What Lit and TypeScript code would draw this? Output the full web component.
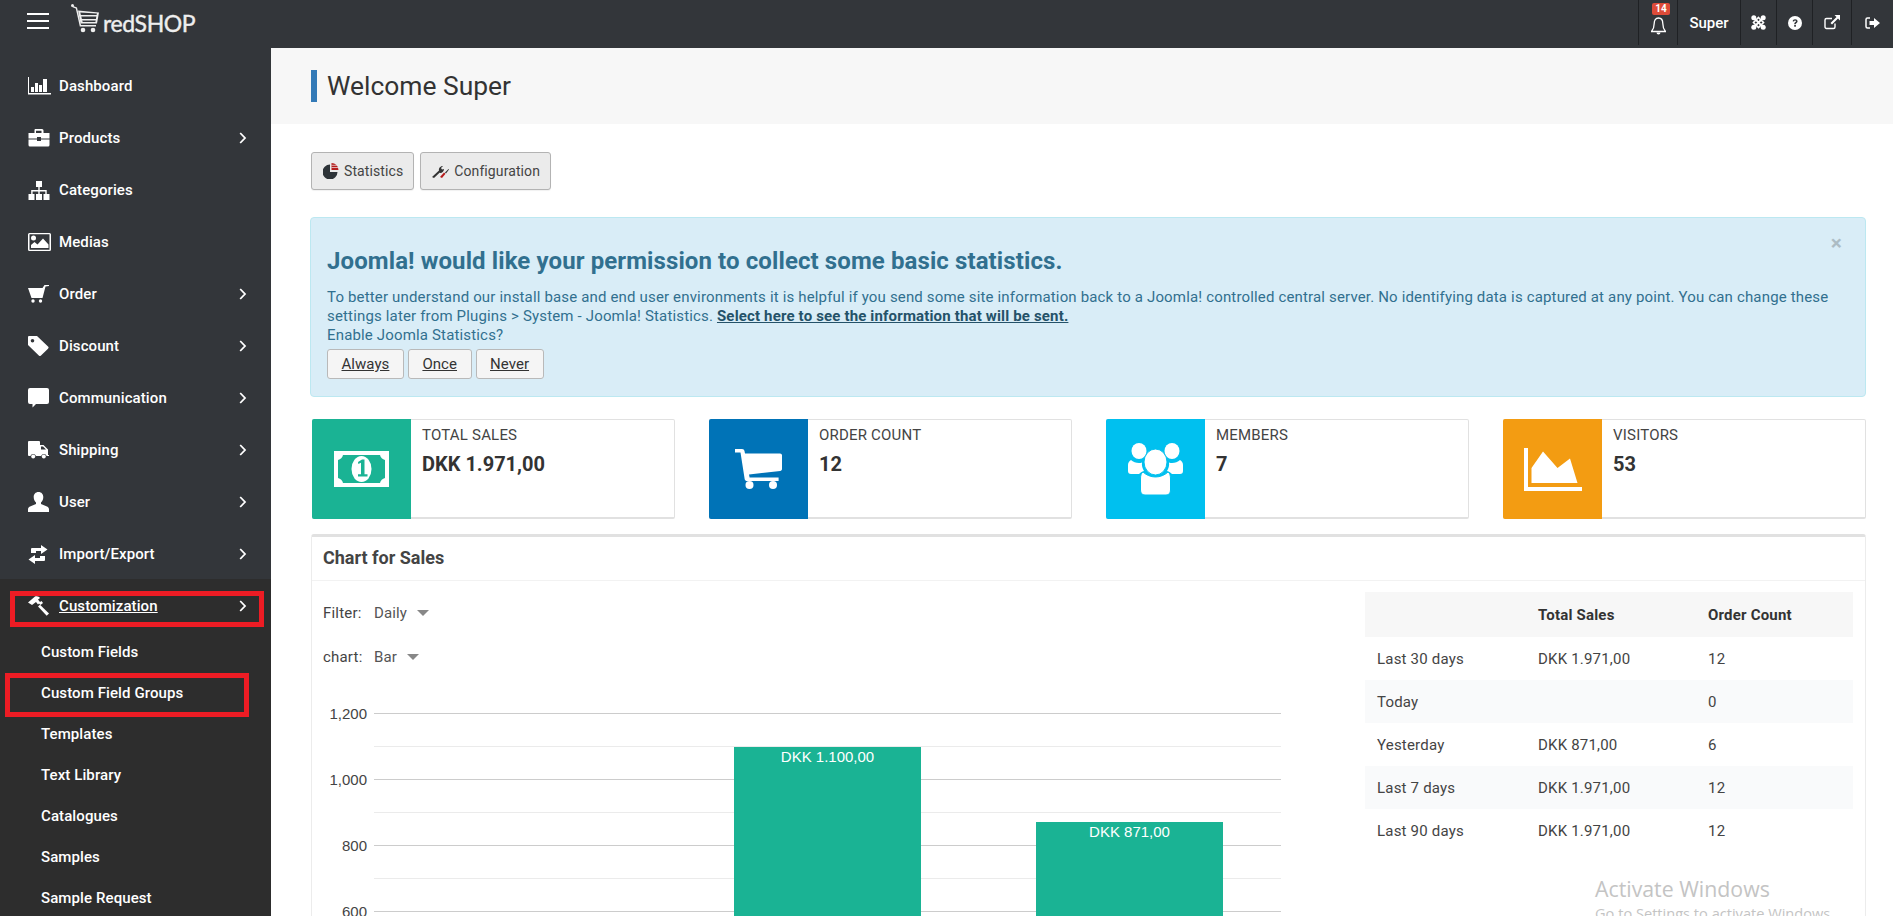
import { LitElement, html, css, svg } from 'lit';
import { customElement } from 'lit/decorators.js';

const icons: Record<string, any> = {
  dashboard: svg`<svg class="ni" width="23" height="18" viewBox="0 0 23 18"><path d="M0 0h1v16h22v1.500H0z"/><rect x="3" y="10" width="3" height="5"/><rect x="7" y="6" width="3" height="9"/><rect x="11" y="8" width="3" height="7"/><rect x="15" y="2" width="4" height="13"/></svg>`,
  products: svg`<svg class="ni" width="22" height="18" viewBox="0 0 22 18"><path d="M7 0h7a1.500 1.500 0 0 1 1.500 1.500V4h6V9.500H13V8H9v1.500H.5V4h6V1.500A1.500 1.500 0 0 1 7 0zm1 1.800V4h5.500V1.800z" fill-rule="evenodd"/><path d="M.5 10.500H9V12h4v-1.500h8.500V16a1.500 1.500 0 0 1-1.500 1.500H2A1.500 1.500 0 0 1 .5 16z"/></svg>`,
  categories: svg`<svg class="ni" width="22" height="19" viewBox="0 0 22 19"><rect x="8" y="0" width="6" height="6"/><rect x="0.500" y="13" width="6" height="6"/><rect x="8" y="13" width="6" height="6"/><rect x="15.500" y="13" width="6" height="6"/><path d="M10.300 6h1.400v3h7v4h-1.400v-2.600h-5.600V13h-1.400v-2.600H4.600V13H3.200V9h7.100z"/></svg>`,
  medias: svg`<svg class="ni" width="23" height="18" viewBox="0 0 23 18"><path d="M1.500 0h20A1.500 1.500 0 0 1 23 1.500v15a1.500 1.500 0 0 1-1.500 1.500h-20A1.500 1.500 0 0 1 0 16.500v-15A1.500 1.500 0 0 1 1.500 0zM1.500 1.300v15.400h20V1.300z" fill-rule="evenodd"/><circle cx="5.500" cy="5" r="2.500"/><path d="M3 15v-3l3.500-3 3 2.500L15 5.500l5.500 6V15z"/></svg>`,
  order: svg`<svg class="ni" width="21" height="18" viewBox="0 0 21 18"><path d="M0 3h14.500l2-3H21v1l-3.500.500L14.500 13h-11z"/><circle cx="5" cy="16" r="1.700"/><circle cx="12.500" cy="16" r="1.700"/></svg>`,
  discount: svg`<svg class="ni" width="21" height="20" viewBox="0 0 21 20"><path d="M1 0h8l11 10.500a1.500 1.500 0 0 1 0 2.200L13 19.500a1.500 1.500 0 0 1-2.200 0L0 9V1a1 1 0 0 1 1-1zm3.500 3A1.800 1.800 0 1 0 4.500 6.600 1.800 1.800 0 0 0 4.500 3z" fill-rule="evenodd"/></svg>`,
  communication: svg`<svg class="ni" width="21" height="20" viewBox="0 0 21 20"><path d="M2 0h17a2 2 0 0 1 2 2v12a2 2 0 0 1-2 2H8l-3.500 3.500V16H2a2 2 0 0 1-2-2V2a2 2 0 0 1 2-2z"/></svg>`,
  shipping: svg`<svg class="ni" width="21" height="18" viewBox="0 0 21 18"><path d="M1 0h10a1 1 0 0 1 1 1v3h3.500L20 8.500V14h1v1h-2.300a3 3 0 0 0-5.600 0H8a3 3 0 0 0-5.600 0H1a1 1 0 0 1-1-1V1a1 1 0 0 1 1-1zM13 5.500V8.500h5l-3-3z" fill-rule="evenodd"/><circle cx="5.200" cy="15.500" r="2"/><circle cx="15.800" cy="15.500" r="2"/></svg>`,
  user: svg`<svg class="ni" width="21" height="20" viewBox="0 0 21 20"><path d="M10.500 0c3 0 4.800 2.200 4.800 5 0 2.300-1 4.300-2.300 5.500v1.500l6 2.500c1.300.6 2 1.600 2 3v2.500H0V17.500c0-1.400.7-2.400 2-3l6-2.500v-1.500C6.700 9.300 5.700 7.300 5.700 5c0-2.800 1.800-5 4.800-5z"/></svg>`,
  import: svg`<svg class="ni" width="20" height="19" viewBox="0 0 20 19"><path d="M4 3h9V0l6.500 4.500L13 9V6H8v2H3V4a1 1 0 0 1 1-1z"/><path d="M16 16H7v3L.5 14.500 7 10v3h5v-2h5v4a1 1 0 0 1-1 1z"/></svg>`,
  custom: svg`<svg class="ni" width="21" height="20" viewBox="0 0 21 20"><path d="M0 6.500L7 .5c2-.8 4 0 5 1.500L10 3.500l2 2.500 1.500-1L15 7l-2.500 2-1.500-1.500-1 1-2-2.500-4 3z"/><path d="M10 10.500l2-1.800L21 17.500l-2.300 2.300z"/></svg>`,
};

const chevron = html`<svg class="chev" width="8" height="12" viewBox="0 0 8 12"><path d="M1.200 1l4.800 5-4.800 5" fill="none" stroke="#fff" stroke-width="1.800"/></svg>`;

const navItems = [
  { name: 'Dashboard', icon: 'dashboard', more: false },
  { name: 'Products', icon: 'products', more: true },
  { name: 'Categories', icon: 'categories', more: false },
  { name: 'Medias', icon: 'medias', more: false },
  { name: 'Order', icon: 'order', more: true },
  { name: 'Discount', icon: 'discount', more: true },
  { name: 'Communication', icon: 'communication', more: true },
  { name: 'Shipping', icon: 'shipping', more: true },
  { name: 'User', icon: 'user', more: true },
  { name: 'Import/Export', icon: 'import', more: true },
];

const subItems = ['Custom Fields', 'Custom Field Groups', 'Templates', 'Text Library', 'Catalogues', 'Samples', 'Sample Request'];

const statCards = [
  {
    label: 'TOTAL SALES', value: 'DKK 1.971,00', color: '#1ab394',
    icon: svg`<svg width="55" height="36" viewBox="0 0 55 36"><path d="M0 0h55v36H0z" fill="#fff"/><path d="M9 4h37c.5 2.500 2.500 4.500 5 5v18c-2.500.5-4.500 2.500-5 5H9c-.5-2.500-2.500-4.500-5-5V9c2.500-.5 4.500-2.500 5-5z" fill="#1ab394"/><path d="M0 0h4v4H0zM51 0h4v4h-4zM0 32h4v4H0zM51 32h4v4h-4z" fill="#fff"/><ellipse cx="27.500" cy="18" rx="10" ry="13" fill="#fff"/><path d="M24 12.500l4-2.500h2.500v15.500h3V28h-9.500v-2.500h3V13.500l-2.700 1.300z" fill="#1ab394" transform="translate(0 -1) scale(1 .95)"/></svg>`,
  },
  {
    label: 'ORDER COUNT', value: '12', color: '#0073b7',
    icon: svg`<svg width="47" height="40" viewBox="0 0 47 40"><path d="M0 0h7c1.500 0 2.200.7 2.500 2l.5 2.500h35c1.200 0 2 .8 2 2V20c0 1-.7 1.800-1.800 2L14 25.500l.6 3h29v3.500H12c-1.200 0-2-.7-2.300-1.800L5.500 3.500H0z" fill="#fff"/><circle cx="14.500" cy="36" r="4" fill="#fff"/><circle cx="38" cy="36" r="4" fill="#fff"/></svg>`,
  },
  {
    label: 'MEMBERS', value: '7', color: '#00c0ef',
    icon: svg`<svg width="55" height="52" viewBox="0 0 55 52"><g fill="#fff"><ellipse cx="11" cy="8" rx="7.500" ry="8"/><ellipse cx="44" cy="8" rx="7.500" ry="8"/><path d="M3 17c2 2 5 3 8 3 1 0 2 0 3-.5-.5 3 .5 6 2 8.500-2 .5-4 2-5 3H3c-2 0-3-1-3-3v-6c0-2 1-4 3-5z"/><path d="M52 17c-2 2-5 3-8 3-1 0-2 0-3-.5.5 3-.5 6-2 8.500 2 .5 4 2 5 3h8c2 0 3-1 3-3v-6c0-2-1-4-3-5z"/></g><ellipse cx="27.500" cy="19" rx="11.500" ry="13" fill="#fff" stroke="#00c0ef" stroke-width="1"/><path d="M15 29c3 3 8 5 12.500 5S37 32 40 29c2 1 2.500 4 2.500 7v11c0 3-1.500 5-4.500 5H17c-3 0-4.500-2-4.500-5V36c0-3 .5-6 2.500-7z" fill="#fff" stroke="#00c0ef" stroke-width="1"/></svg>`,
  },
  {
    label: 'VISITORS', value: '53', color: '#f39c12',
    icon: svg`<svg width="58" height="43" viewBox="0 0 58 43"><path d="M0 0h4v39h54v4H0z" fill="#fff"/><path d="M7.500 35V20L19 3.500l14.500 16.500L46 10.500l7.500 24.500z" fill="#fff"/></svg>`,
  },
];

const tableRows = [
  ['Last 30 days', 'DKK 1.971,00', '12'],
  ['Today', '', '0'],
  ['Yesterday', 'DKK 871,00', '6'],
  ['Last 7 days', 'DKK 1.971,00', '12'],
  ['Last 90 days', 'DKK 1.971,00', '12'],
];

const gridLines = [
  { y: 34.5, label: '1,200' },
  { y: 67.5 },
  { y: 100.5, label: '1,000' },
  { y: 133.5 },
  { y: 166.5, label: '800' },
  { y: 199.5 },
  { y: 232.5, label: '600' },
];

const bars = [
  { x: 422, y: 68, label: 'DKK 1.100,00' },
  { x: 724, y: 143, label: 'DKK 871,00' },
];

@customElement('app-root')
export class AppRoot extends LitElement {
  static styles = css`
    :host {
      display: block;
      position: relative;
      width: 1893px;
      height: 916px;
      overflow: hidden;
      font-family: Roboto, "Liberation Sans", sans-serif;
      font-size: 15px;
      letter-spacing: .2px;
      color: #333;
      background: #fff;
    }
    * { box-sizing: border-box; }
    .topbar {
      display: flex;
      align-items: flex-start;
      height: 48px;
      background: #33363a;
      color: #fff;
    }
    .burger {
      display: flex;
      flex-direction: column;
      gap: 5px;
      width: 22px;
      margin: 13px 0 0 27px;
    }
    .burger span { height: 2px; background: #fff; }
    .logo {
      display: flex;
      align-items: flex-start;
      margin: 4px 0 0 22px;
    }
    .logo b {
      font-family: Lato, sans-serif;
      font-weight: 400;
      font-size: 23px;
      margin: 5px 0 0 4px;
      letter-spacing: -0.4px;
      color: #eee;
      -webkit-text-stroke: .4px #eee;
    }
    .tools { display: flex; margin-left: auto; height: 45px; }
    .tool {
      position: relative;
      display: flex;
      align-items: center;
      justify-content: center;
      border-left: 1px solid #1f2124;
      font-weight: 500;
      letter-spacing: 0;
    }
    .badge {
      position: absolute;
      top: 3px;
      left: 13px;
      width: 18px;
      height: 12px;
      border-radius: 2px;
      background: #dd4b39;
      color: #fff;
      font-size: 10px;
      font-weight: 700;
      line-height: 12px;
      text-align: center;
    }
    .layout { display: flex; }
    .sidebar {
      position: relative;
      width: 271px;
      height: 868px;
      flex: none;
      padding-top: 12px;
      background: #33363a;
      color: #fff;
      font-weight: 500;
      letter-spacing: .1px;
    }
    .item {
      display: flex;
      align-items: center;
      height: 52px;
      padding-left: 28px;
    }
    .item .slot { width: 31px; display: flex; }
    .ni { fill: #fff; }
    .chev { margin-left: auto; margin-right: 24px; }
    .group { background: #2d2d2d; height: 400px; margin-top: -1px; padding-top: 1px; }
    .group .item .label { text-decoration: underline; }
    .sub {
      height: 41px;
      line-height: 41px;
      padding-left: 41px;
    }
    .mark {
      position: absolute;
      border: 5px solid #ed1c24;
      pointer-events: none;
    }
    .mark.one { left: 10px; top: 543px; width: 254px; height: 36px; }
    .mark.two { left: 5px; top: 625px; width: 244px; height: 44px; }
    .main { flex: 1; min-width: 0; }
    .title-bar {
      display: flex;
      align-items: center;
      height: 76px;
      padding-left: 40px;
      background: #f7f7f7;
    }
    .title-bar h1 {
      margin: 0;
      height: 32px;
      padding-left: 10px;
      border-left: 6px solid #337ab7;
      font-size: 26.400px;
      line-height: 32px;
      font-weight: 400;
      letter-spacing: 0;
      color: #333;
    }
    .content { padding: 28px 27px 0 39px; }
    .actions { display: flex; gap: 6px; margin-left: 1px; }
    .action {
      display: flex;
      align-items: center;
      gap: 5px;
      height: 38px;
      padding: 0 10px 0 11px;
      background: #ebebeb;
      border: 1px solid #b3b3b3;
      border-radius: 3px;
      box-shadow: 0 1px 1px rgba(0, 0, 0, .06);
      color: #444;
      font-size: 14px;
      letter-spacing: .1px;
    }
    .alert {
      position: relative;
      height: 180px;
      margin-top: 27px;
      padding: 26px 16px 0;
      background: #d9edf7;
      border: 1px solid #bce8f1;
      border-radius: 4px;
      color: #31708f;
      line-height: 19px;
      letter-spacing: .16px;
    }
    .alert h2 {
      margin: 0 0 10px;
      font-size: 24px;
      line-height: 34px;
      font-weight: 700;
      letter-spacing: .1px;
      color: #31708f;
    }
    .alert p { margin: 0; }
    .alert a { font-weight: 700; color: #245269; text-decoration: underline; }
    .close {
      position: absolute;
      top: 15px;
      right: 23px;
      font-size: 21px;
      line-height: 21px;
      font-weight: 700;
      color: #000;
      opacity: .2;
    }
    .choices { display: flex; gap: 4px; margin-top: 4px; }
    .choice {
      height: 30px;
      line-height: 29px;
      padding: 0 13.500px;
      background: #f5f5f5;
      border: 1px solid #b9b9b9;
      border-radius: 3px;
      color: #333;
      text-decoration: underline;
      letter-spacing: .05px;
    }
    .cards {
      display: grid;
      grid-template-columns: repeat(4, 363px);
      gap: 34px;
      margin: 22px 0 0 2px;
    }
    .card {
      display: flex;
      height: 100px;
      background: #fff;
      border: 1px solid #e1e1e1;
      border-bottom-width: 2px;
      border-radius: 2px;
    }
    .card-icon {
      display: flex;
      align-items: center;
      justify-content: center;
      width: 99px;
      margin: -1px 0 -2px -1px;
      flex: none;
      border-radius: 2px 0 0 2px;
    }
    .card-body { padding: 5px 11px; }
    .card-label { line-height: 20px; color: #444; }
    .card-value { margin-top: 8px; font-size: 20px; line-height: 22px; font-weight: 700; letter-spacing: 0; color: #333; }
    .panel {
      height: 400px;
      margin: 15px 0 0 1px;
      border: 1px solid #ececec;
      border-top: 3px solid #e1e1e1;
      border-radius: 3px 3px 0 0;
    }
    .panel-head {
      height: 44px;
      padding-left: 11px;
      border-bottom: 1px solid #f2f2f2;
      font-size: 18px;
      line-height: 41px;
      font-weight: 700;
      letter-spacing: 0;
      color: #444;
    }
    .panel-body { display: flex; }
    .chart-col { width: 1053px; flex: none; padding-top: 10px; }
    .filter {
      display: flex;
      align-items: center;
      height: 44px;
      padding-left: 11px;
      color: #444;
    }
    .filter span { width: 51px; }
    .filter em { font-style: normal; color: #555; margin-right: 10px; letter-spacing: .1px; }
    .caret {
      width: 0;
      height: 0;
      border-left: 6px solid transparent;
      border-right: 6px solid transparent;
      border-top: 6px solid #888;
    }
    .chart { display: block; }
    .chart text { font-family: "Liberation Sans", Arial, sans-serif; font-size: 15px; letter-spacing: 0; }
    .stats {
      width: 488px;
      height: 260px;
      margin-top: 11px;
      border-collapse: collapse;
      table-layout: fixed;
      color: #444;
    }
    .stats th {
      height: 45px;
      padding: 0 12px;
      background: #f7f7f7;
      text-align: left;
      font-weight: 700;
      color: #333;
    }
    .stats td { height: 43px; padding: 0 12px; }
    .stats tbody tr:nth-child(even) { background: #f9fafb; }
    .watermark {
      position: absolute;
      left: 1595px;
      top: 875px;
      color: #c4c4c4;
      font-family: "Open Sans", sans-serif;
      letter-spacing: 0;
    }
    .watermark div:first-child { font-size: 21.300px; line-height: 28px; }
    .watermark div:last-child { font-size: 14.600px; line-height: 20px; }
  `;

  renderTopbar() {
    return html`
      <header class="topbar">
        <div class="burger"><span></span><span></span><span></span></div>
        <div class="logo">
          <svg width="28" height="29" viewBox="0 0 28 29"><path d="M2 2l4 1.500 4 17.500h15v1.500H8.800L4.800 4.500 1.500 3.200z" fill="#eee"/><circle cx="1.500" cy="1.500" r="1.500" fill="#eee"/><path d="M7 6.500l21 2-2 11H9.500zM9.300 8.500l.6 2.500h15.700l.3-1.500zM10.300 12.500l.6 2.500h14l.4-2.500zM11.200 16.500l.5 1.500h12.700l.3-1.500z" fill="#eee" fill-rule="evenodd"/><circle cx="12" cy="26" r="2.300" fill="#eee"/><circle cx="22" cy="26" r="2.300" fill="#eee"/></svg>
          <b>redSHOP</b>
        </div>
        <div class="tools">
          <div class="tool" style="width:39px">
            <svg width="15" height="18" viewBox="0 0 15 18" style="margin-top:7px"><path d="M7.500 1c3 0 4.300 2.500 4.300 5.500 0 4 1 6 2.700 8H.5c1.700-2 2.700-4 2.700-8C3.200 3.500 4.500 1 7.500 1z" fill="none" stroke="#fff" stroke-width="1.300"/><path d="M5.500 15.500h4a2 2 0 0 1-4 0z" fill="#fff"/></svg>
            <span class="badge">14</span>
          </div>
          <div class="tool" style="width:63px">Super</div>
          <div class="tool" style="width:36px"><svg width="15" height="15" viewBox="0 0 15 15"><path d="M7.500 2.500L12.500 7.500 7.500 12.500 2.500 7.500z" fill="none" stroke="#fff" stroke-width="1.600"/><path d="M3 3l9 9M12 3l-9 9" fill="none" stroke="#fff" stroke-width="1.800"/><g fill="#fff"><circle cx="2.800" cy="2.800" r="2.500"/><circle cx="12.200" cy="2.800" r="2.500"/><circle cx="2.800" cy="12.200" r="2.500"/><circle cx="12.200" cy="12.200" r="2.500"/></g></svg></div>
          <div class="tool" style="width:36px"><svg width="14" height="14" viewBox="0 0 14 14"><circle cx="7" cy="7" r="7" fill="#fff"/><path d="M4.600 5.300C4.800 3.900 5.800 3.200 7.100 3.200c1.400 0 2.500.8 2.500 2.100 0 1.800-1.800 1.700-1.800 3H6.200c0-2.100 1.800-2 1.800-3 0-.5-.4-.8-.9-.8-.6 0-.9.3-1.100 1z" fill="#33363a"/><rect x="6.200" y="9" width="1.700" height="1.700" fill="#33363a"/></svg></div>
          <div class="tool" style="width:39px"><svg width="16" height="15" viewBox="0 0 16 15"><path d="M11 8.500V12a1.500 1.500 0 0 1-1.500 1.500H2.500A1.500 1.500 0 0 1 1 12V5a1.500 1.500 0 0 1 1.500-1.500H8" fill="none" stroke="#fff" stroke-width="1.400"/><path d="M10.500 0H16v5.500L14 3.500 8 9.500 6.500 8l6-6z" fill="#fff"/></svg></div>
          <div class="tool" style="width:42px"><svg width="15" height="12" viewBox="0 0 15 12"><path d="M5 1H2.500A1.500 1.500 0 0 0 1 2.500v7A1.500 1.500 0 0 0 2.500 11H5" fill="none" stroke="#fff" stroke-width="1.500"/><path d="M9 1l6 5-6 5V8H4.500V4H9z" fill="#fff"/></svg></div>
        </div>
      </header>
    `;
  }

  renderSidebar() {
    return html`
      <nav class="sidebar">
        ${navItems.map((n) => html`
          <div class="item">
            <span class="slot">${icons[n.icon]}</span>
            <span class="label">${n.name}</span>
            ${n.more ? chevron : ''}
          </div>
        `)}
        <div class="group">
          <div class="item">
            <span class="slot">${icons.custom}</span>
            <span class="label">Customization</span>
            ${chevron}
          </div>
          ${subItems.map((s) => html`<div class="sub">${s}</div>`)}
        </div>
        <div class="mark one"></div>
        <div class="mark two"></div>
      </nav>
    `;
  }

  renderChart() {
    return html`
      <svg class="chart" width="1053" height="237" viewBox="0 0 1053 237">
        ${gridLines.map((g) => svg`
          <line x1="62" x2="969" y1=${g.y} y2=${g.y} stroke=${g.label ? '#ccc' : '#ebebeb'} />
          ${g.label ? svg`<text x="55" y=${g.y + 5} text-anchor="end" fill="#444">${g.label}</text>` : ''}
        `)}
        ${bars.map((b) => svg`
          <rect x=${b.x} y=${b.y} width="187" height="300" fill="#1ab394" />
          <text x=${b.x + 93.5} y=${b.y + 15} text-anchor="middle" fill="#fff">${b.label}</text>
        `)}
      </svg>
    `;
  }

  render() {
    return html`
      ${this.renderTopbar()}
      <div class="layout">
        ${this.renderSidebar()}
        <main class="main">
          <div class="title-bar"><h1>Welcome Super</h1></div>
          <div class="content">
            <div class="actions">
              <div class="action">
                <svg width="16" height="16" viewBox="0 0 16 16"><path d="M7 1.500V9h7.500A7.500 7.500 0 1 1 7 1.500z" fill="#2d3338"/><path d="M8.500 0a7 7 0 0 1 7 7h-7z" fill="#b51c1c"/><path d="M8.500 2.300h7M8.500 4.500h7" stroke="#eee" stroke-width=".7"/></svg>
                Statistics
              </div>
              <div class="action">
                <svg width="17" height="14" viewBox="0 0 17 14"><path d="M0 13l7-6.500c-.5-2 1-4.500 4-4.500l-2 2 1 1.500 2-.5c.2 2.500-2.500 4.500-4.500 3.800L2 14z" fill="#333"/><path d="M8 13l4-4.500 1.500 1.200L10 14z" fill="#b51c1c"/><path d="M13 8.500l3.500-3.500.5.500-3 4z" fill="#333"/></svg>
                Configuration
              </div>
            </div>
            <div class="alert">
              <span class="close">×</span>
              <h2>Joomla! would like your permission to collect some basic statistics.</h2>
              <p>To better understand our install base and end user environments it is helpful if you send some site information back to a Joomla! controlled central server. No identifying data is captured at any point. You can change these settings later from Plugins &gt; System - Joomla! Statistics. <a>Select here to see the information that will be sent.</a><br>Enable Joomla Statistics?</p>
              <div class="choices">
                <span class="choice">Always</span>
                <span class="choice">Once</span>
                <span class="choice">Never</span>
              </div>
            </div>
            <div class="cards">
              ${statCards.map((c) => html`
                <div class="card">
                  <div class="card-icon" style="background:${c.color}">${c.icon}</div>
                  <div class="card-body">
                    <div class="card-label">${c.label}</div>
                    <div class="card-value">${c.value}</div>
                  </div>
                </div>
              `)}
            </div>
            <section class="panel">
              <div class="panel-head">Chart for Sales</div>
              <div class="panel-body">
                <div class="chart-col">
                  <div class="filter"><span>Filter:</span><em>Daily</em><i class="caret"></i></div>
                  <div class="filter"><span>chart:</span><em>Bar</em><i class="caret"></i></div>
                  ${this.renderChart()}
                </div>
                <table class="stats">
                  <colgroup><col style="width:161px"><col style="width:170px"><col style="width:157px"></colgroup>
                  <thead><tr><th></th><th>Total Sales</th><th>Order Count</th></tr></thead>
                  <tbody>
                    ${tableRows.map((r) => html`<tr>${r.map((d) => html`<td>${d}</td>`)}</tr>`)}
                  </tbody>
                </table>
              </div>
            </section>
          </div>
        </main>
      </div>
      <div class="watermark"><div>Activate Windows</div><div>Go to Settings to activate Windows.</div></div>
    `;
  }
}
